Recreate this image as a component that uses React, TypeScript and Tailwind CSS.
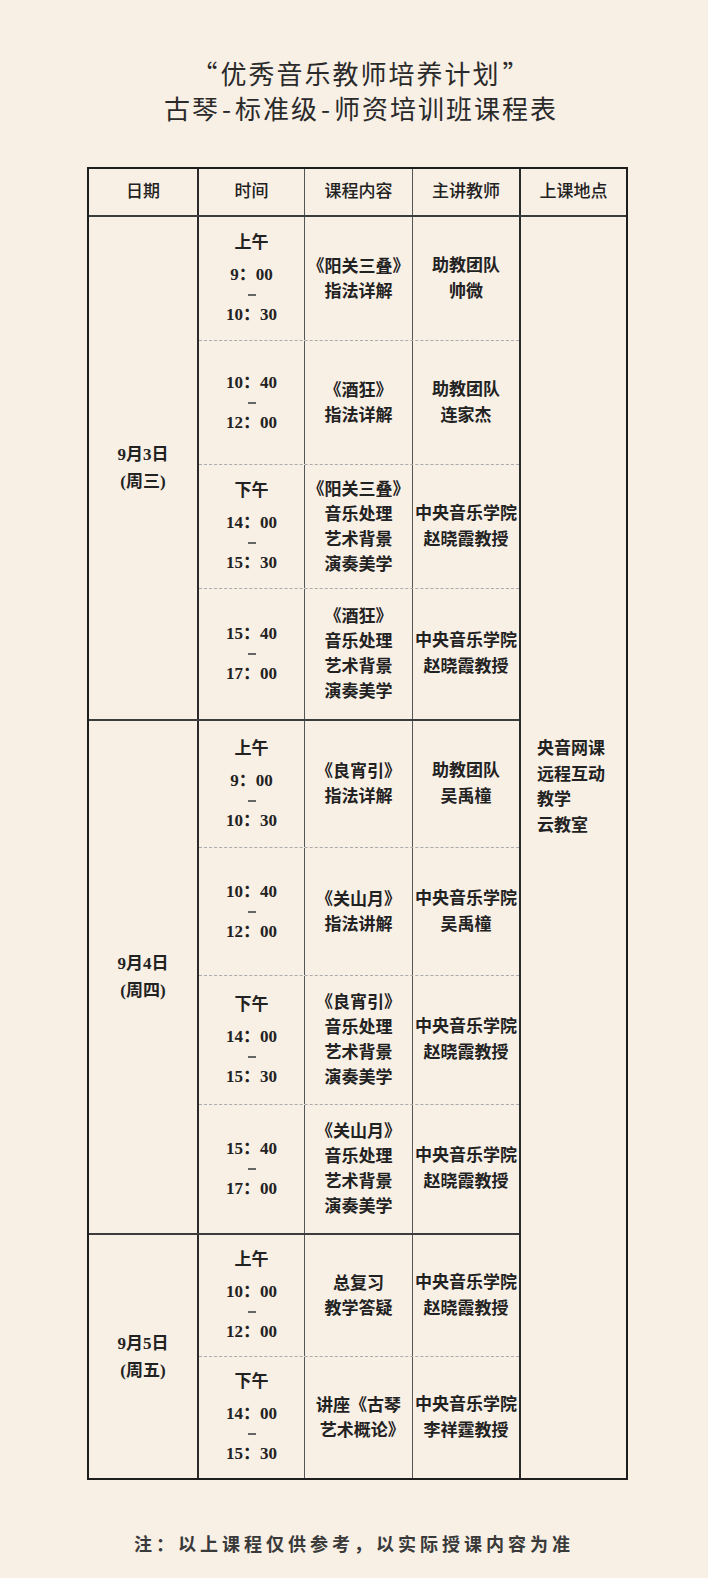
import React from 'react';

type Slot = {
  label?: string;
  from: string;
  to: string;
  course: string[];
  teacher: string[];
  h: string;
  last?: boolean;
};

type Day = {
  date: string;
  week: string;
  slots: Slot[];
  last?: boolean;
};

const days: Day[] = [
  {
    date: '9月3日',
    week: '(周三)',
    slots: [
      { label: '上午', from: '9：00', to: '10：30', course: ['《阳关三叠》', '指法详解'], teacher: ['助教团队', '帅微'], h: 'h-[124px]' },
      { from: '10：40', to: '12：00', course: ['《酒狂》', '指法详解'], teacher: ['助教团队', '连家杰'], h: 'h-[124px]' },
      { label: '下午', from: '14：00', to: '15：30', course: ['《阳关三叠》', '音乐处理', '艺术背景', '演奏美学'], teacher: ['中央音乐学院', '赵晓霞教授'], h: 'h-[124px]' },
      { from: '15：40', to: '17：00', course: ['《酒狂》', '音乐处理', '艺术背景', '演奏美学'], teacher: ['中央音乐学院', '赵晓霞教授'], h: 'h-[130px]', last: true },
    ],
  },
  {
    date: '9月4日',
    week: '(周四)',
    slots: [
      { label: '上午', from: '9：00', to: '10：30', course: ['《良宵引》', '指法详解'], teacher: ['助教团队', '吴禹橦'], h: 'h-[127px]' },
      { from: '10：40', to: '12：00', course: ['《关山月》', '指法讲解'], teacher: ['中央音乐学院', '吴禹橦'], h: 'h-[128px]' },
      { label: '下午', from: '14：00', to: '15：30', course: ['《良宵引》', '音乐处理', '艺术背景', '演奏美学'], teacher: ['中央音乐学院', '赵晓霞教授'], h: 'h-[129px]' },
      { from: '15：40', to: '17：00', course: ['《关山月》', '音乐处理', '艺术背景', '演奏美学'], teacher: ['中央音乐学院', '赵晓霞教授'], h: 'h-[128px]', last: true },
    ],
  },
  {
    date: '9月5日',
    week: '(周五)',
    last: true,
    slots: [
      { label: '上午', from: '10：00', to: '12：00', course: ['总复习', '教学答疑'], teacher: ['中央音乐学院', '赵晓霞教授'], h: 'h-[122px]' },
      { label: '下午', from: '14：00', to: '15：30', course: ['讲座《古琴', '艺术概论》'], teacher: ['中央音乐学院', '李祥霆教授'], h: 'h-[121px]', last: true },
    ],
  },
];

function Line({ text }: { text: string }) {
  const chars = Array.from(text);
  return (
    <div className="whitespace-nowrap">
      {chars.map((ch, i) =>
        ch === '《' && i === 0 ? (
          <span key={i} className="-ml-[0.45em]">《</span>
        ) : ch === '》' && i === chars.length - 1 ? (
          <span key={i} className="-mr-[0.45em]">》</span>
        ) : (
          <span key={i}>{ch}</span>
        )
      )}
    </div>
  );
}

function SlotRow({ slot }: { slot: Slot }) {
  return (
    <div className={`flex ${slot.h} ${slot.last ? '' : 'border-b border-dashed border-[#ababab]'}`}>
      {/* time */}
      <div className="w-[106px] border-r border-[#555] flex flex-col items-center justify-center">
        {slot.label && <div className="leading-[24px] mb-[9px]">{slot.label}</div>}
        <div className="leading-[22px]">{slot.from}</div>
        <div className="h-[18px] flex items-center">
          <div className="w-[8px] h-[2px] bg-[#666]" />
        </div>
        <div className="leading-[22px]">{slot.to}</div>
      </div>
      {/* course */}
      <div className="w-[108px] border-r border-[#555] flex flex-col items-center justify-center leading-[25px]">
        {slot.course.map((c) => (
          <Line key={c} text={c} />
        ))}
      </div>
      {/* teacher */}
      <div className="w-[106px] flex flex-col items-center justify-center leading-[26px]">
        {slot.teacher.map((t) => (
          <div key={t} className="whitespace-nowrap">{t}</div>
        ))}
      </div>
    </div>
  );
}

export default function App() {
  return (
    <div className="min-h-screen w-full bg-[#f8efe5] text-[#262626] overflow-hidden">
      {/* Title */}
      <div className="pt-[55px] pl-[14px] text-center font-['Noto_Sans_CJK_SC',sans-serif] text-[26px] leading-[35px] tracking-[2px] text-[#2a2a2a]">
        <div>
          <span className="mr-[1px]">“</span>优秀音乐教师培养计划<span className="ml-[2px]">”</span>
        </div>
        <div>
          古琴<span className="mx-[2px]">-</span>标准级<span className="mx-[2px]">-</span>师资培训班课程表
        </div>
      </div>

      {/* Table */}
      <div className="mt-[42px] ml-[87px] w-[541px] border-2 border-[#1e1e1e] font-['Liberation_Serif','Noto_Sans_CJK_SC',serif] text-[17px] font-semibold text-[#222]">
        {/* Header */}
        <div className="flex h-[48px] border-b-2 border-[#3c3c3c] font-medium">
          <div className="w-[110px] border-r-2 border-[#2a2a2a] flex items-center justify-center">日期</div>
          <div className="w-[106px] border-r border-[#555] flex items-center justify-center">时间</div>
          <div className="w-[108px] border-r border-[#555] flex items-center justify-center">课程内容</div>
          <div className="w-[108px] border-r-2 border-[#2a2a2a] flex items-center justify-center">主讲教师</div>
          <div className="flex-1 flex items-center justify-center">上课地点</div>
        </div>

        {/* Body */}
        <div className="flex">
          <div className="w-[432px] border-r-2 border-[#2a2a2a] flex flex-col">
            {days.map((day) => (
              <div key={day.date} className={`flex ${day.last ? '' : 'border-b-2 border-[#3c3c3c]'}`}>
                <div className="w-[110px] border-r-2 border-[#2a2a2a] flex flex-col items-center justify-center leading-[27px]">
                  <div>{day.date}</div>
                  <div>{day.week}</div>
                </div>
                <div className="flex flex-col">
                  {day.slots.map((s, i) => (
                    <SlotRow key={i} slot={s} />
                  ))}
                </div>
              </div>
            ))}
          </div>
          <div className="flex-1 pt-[519px] pl-[16px] leading-[25.5px]">
            <div>央音网课</div>
            <div>远程互动</div>
            <div>教学</div>
            <div>云教室</div>
          </div>
        </div>
      </div>

      {/* Footer */}
      <div className="mt-[51px] text-center font-['Noto_Sans_CJK_SC',sans-serif] text-[18px] leading-[24px] font-bold tracking-[4px] text-[#3a3a3a]">
        注：以上课程仅供参考，以实际授课内容为准
      </div>
    </div>
  );
}
